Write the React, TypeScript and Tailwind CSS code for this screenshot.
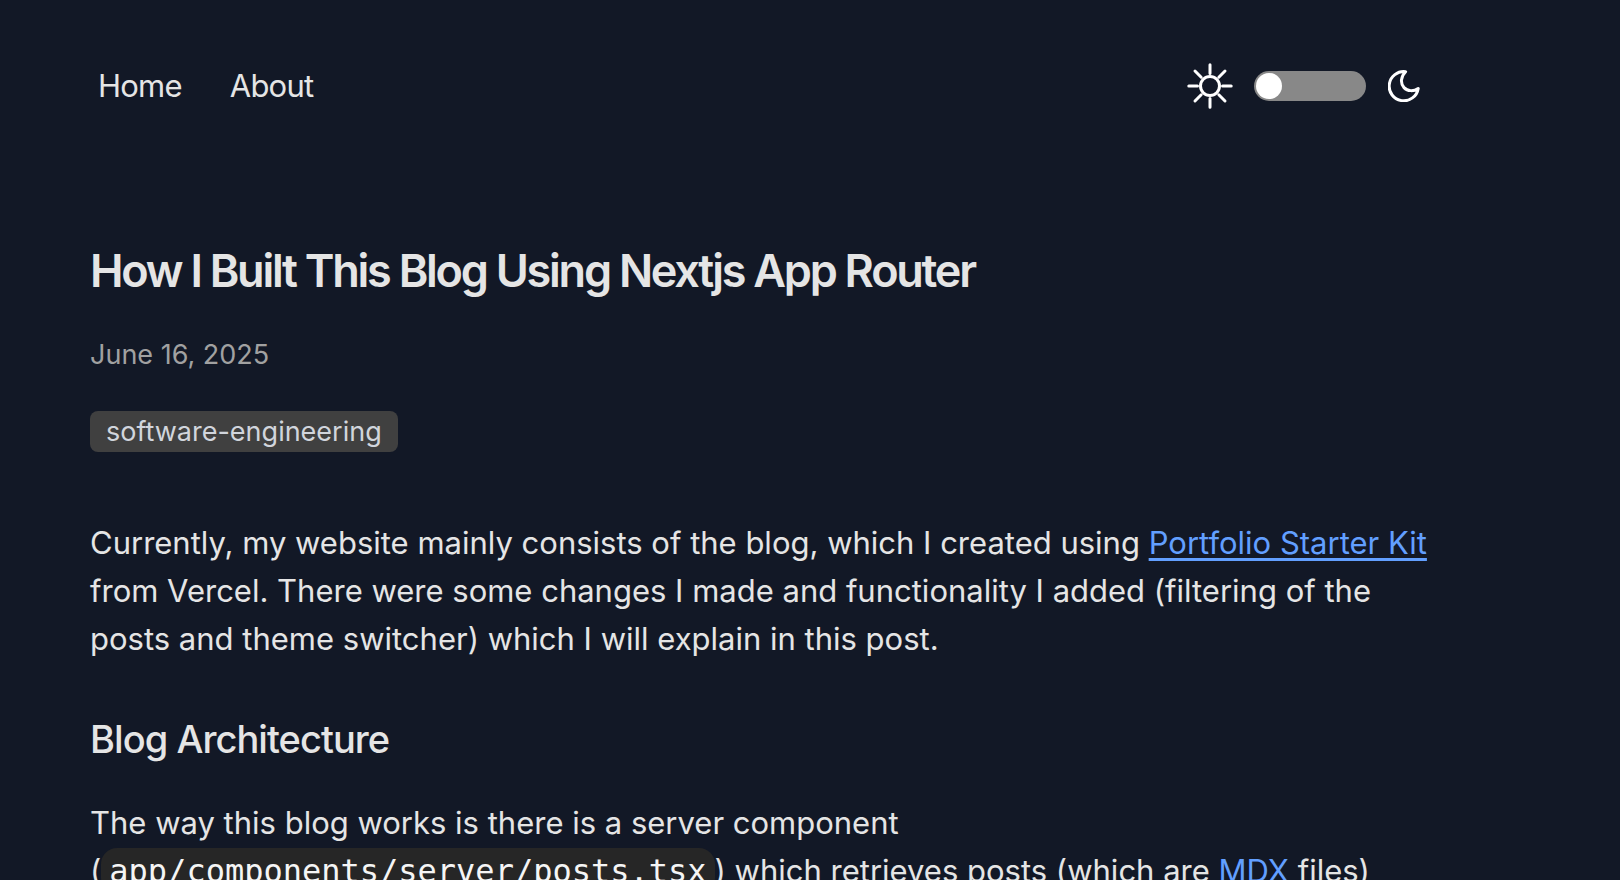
import React from 'react';

const navItems = [
  { href: '#home', label: 'Home' },
  { href: '#about', label: 'About' },
];

function SunIcon() {
  return (
    <svg
      className="w-12 h-12"
      viewBox="0 0 48 48"
      fill="none"
      stroke="currentColor"
      strokeWidth="3"
      strokeLinecap="round"
      aria-hidden="true"
    >
      <circle cx="24" cy="24" r="9.5" />
      <path d="M24 2.8v8.7M24 36.5v8.7M2.8 24h8.7M36.5 24h8.7M9 9l6.2 6.2M32.8 32.8L39 39M9 39l6.2-6.2M32.8 15.2L39 9" />
    </svg>
  );
}

function MoonIcon() {
  return (
    <svg
      className="w-8 h-8"
      viewBox="0 0 32 32"
      fill="none"
      stroke="currentColor"
      strokeWidth="3"
      strokeLinejoin="round"
      strokeLinecap="round"
      aria-hidden="true"
    >
      <path d="M17.6 1.7A14.6 14.6 0 1 0 30.2 18.4C25.6 21.6 19.6 21.4 16 17.6C12.2 13.6 12.6 6.6 17.6 1.7Z" />
    </svg>
  );
}

function ThemeSwitcher() {
  return (
    <label className="flex items-center text-white">
      <span className="sr-only">Toggle theme</span>
      <SunIcon />
      <input
        type="checkbox"
        role="switch"
        className="appearance-none flex items-center w-28 h-[30px] ml-5 mr-[22px] px-0.5 rounded-full bg-[#888888] cursor-pointer before:block before:w-[26px] before:h-[26px] before:rounded-full before:bg-white"
      />
      <MoonIcon />
    </label>
  );
}

function Navbar() {
  return (
    <header className="flex items-center justify-between pr-5 mb-[129px]">
      <nav className="flex gap-12 px-2 tracking-tight">
        {navItems.map((item) => (
          <a key={item.href} href={item.href} className="hover:text-white">
            {item.label}
          </a>
        ))}
      </nav>
      <ThemeSwitcher />
    </header>
  );
}

export default function App() {
  return (
    <div className="min-h-screen bg-[#121826] text-neutral-200 font-['Inter',sans-serif] text-[31px] leading-[48px] antialiased">
      <main className="max-w-[1440px] pl-[90px] pt-[62px]">
        <Navbar />

        <article>
          <h1 className="text-[45px] leading-[64px] font-semibold tracking-tighter">
            How I Built This Blog Using Nextjs App Router
          </h1>
          <p className="mt-8 text-[27px] leading-[40px] text-neutral-400">June 16, 2025</p>
          <div className="flex mt-9">
            <span className="px-4 rounded-lg bg-neutral-700 text-gray-300 text-[27px] leading-[41px]">
              software-engineering
            </span>
          </div>

          <p className="mt-[67px]">
            Currently, my website mainly consists of the blog, which I created using{' '}
            <a
              href="#starter-kit"
              className="text-[#629fff] underline decoration-[3px] underline-offset-4"
            >
              Portfolio Starter Kit
            </a>{' '}
            from Vercel. There were some changes I made and functionality I added (filtering of the
            posts and theme switcher) which I will explain in this post.
          </p>

          <h2 className="mt-12 mb-8 text-[38px] leading-[56px] font-medium tracking-tight">
            Blog Architecture
          </h2>

          <p>
            The way this blog works is there is a server component (
            <code className="px-2 py-1 rounded-2xl bg-neutral-800 text-neutral-100 font-['DejaVu_Sans_Mono',monospace] text-[32px]">
              app/components/server/posts.tsx
            </code>
            ) which retrieves posts (which are{' '}
            <a href="#mdx" className="text-[#629fff]">
              MDX
            </a>{' '}
            files)
          </p>
        </article>
      </main>
    </div>
  );
}
